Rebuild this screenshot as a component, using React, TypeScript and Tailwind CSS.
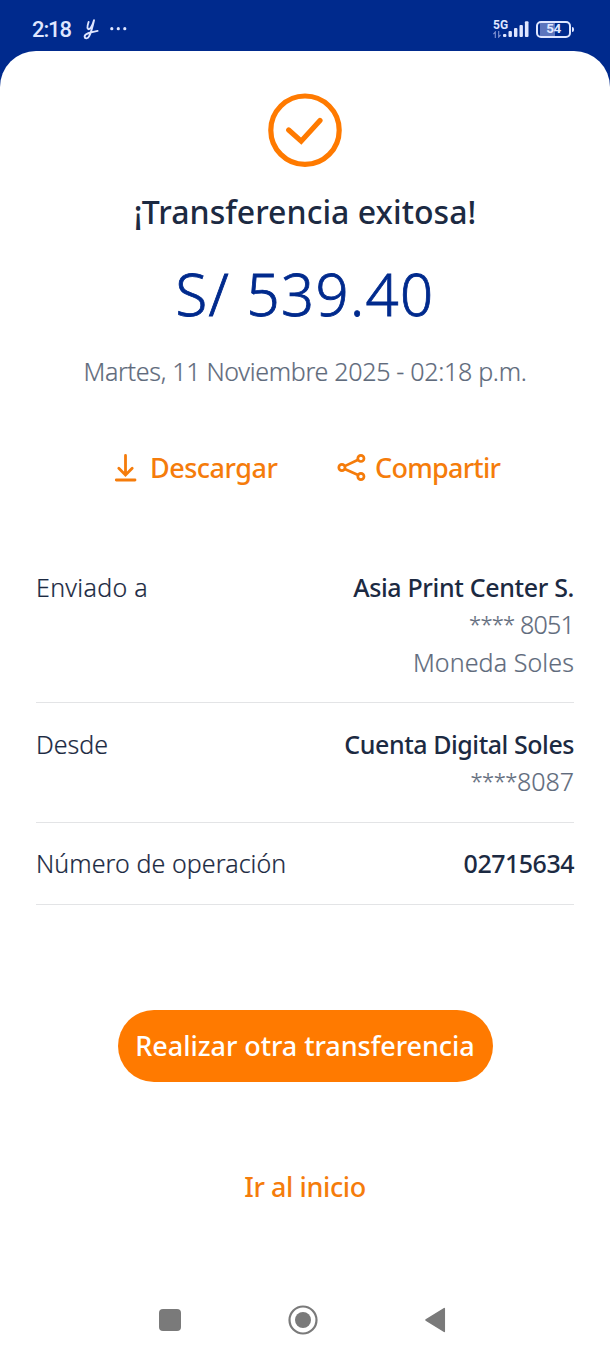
import type { ReactNode } from "react";

function StatusBar() {
  return (
    <header className="flex h-[51px] items-start justify-between pr-[36px] pl-8 pt-[15px] text-[#dfe6ff]">
      <div className="flex h-[28px] items-center">
        <span className="w-[51px] pt-px font-['Roboto',sans-serif] text-[22px] leading-[28px] font-medium tracking-[-1.1px]">2:18</span>
        <svg className="h-[24px] w-[18px]" viewBox="0 0 18 24" fill="none" stroke="currentColor" strokeWidth="1.9" strokeLinecap="round" strokeLinejoin="round">
          <path d="M5.6 5C4.6 8 3.8 11.6 5.5 12.2C7.3 12.8 9.5 8.2 11 3.2C9.7 9 7.8 16 6.2 19.2C4.8 21.9 1.8 22 1.6 19.7C1.4 16.5 7.4 15.3 14.6 13.9" />
        </svg>
        <svg className="ml-[8px] h-1 w-[18px]" viewBox="0 0 18 4" fill="currentColor">
          <circle cx="2.8" cy="1.7" r="1.6" />
          <circle cx="9.3" cy="1.7" r="1.6" />
          <circle cx="15.8" cy="1.7" r="1.6" />
        </svg>
      </div>
      <div className="flex h-[28px] items-center">
        <div className="flex h-[20px] w-[14px] flex-col items-start">
          <span className="font-['Roboto',sans-serif] text-[12px] leading-[12px] font-bold">5G</span>
          <svg className="h-[7px] w-2" viewBox="0 0 8 7" fill="none" stroke="#8294d2" strokeWidth="1.1">
            <path d="M2.3 7V1L.4 3.2M5.7 0V6L7.6 3.8" />
          </svg>
        </div>
        <svg className="-ml-[5px] mr-[7px] h-[18px] w-[27px]" viewBox="0 0 27 18" fill="currentColor">
          <rect x="1" y="14.1" width="3.4" height="3" rx="1" />
          <rect x="6.5" y="11.1" width="3.4" height="6" rx="1" />
          <rect x="12" y="8.1" width="3.4" height="9" rx="1" />
          <rect x="17.5" y="5.1" width="3.4" height="12" rx="1" />
          <rect x="22.9" y="1.2" width="3.6" height="15.9" rx="1" />
        </svg>
        <div className="flex items-center gap-[1px]">
          <div className="flex h-[17px] w-[35px] items-center justify-center rounded-[5px] border-2 border-[#dfe6ff] bg-[linear-gradient(90deg,#002a8d_2px,#5c75bd_2px,#5c75bd_17px,#002a8d_17px)] font-['Roboto',sans-serif] text-[13.5px] leading-none font-bold tracking-[-0.5px]">
            54
          </div>
          <div className="h-[5px] w-[2px] rounded-r bg-[#dfe6ff]" />
        </div>
      </div>
    </header>
  );
}

function Row({ label, children }: { label: ReactNode; children: ReactNode }) {
  return (
    <div className="flex justify-between border-b border-[#e3e4e6] pt-[22.5px] pb-[21px] text-[25px] leading-[37.5px] font-light">
      <div className="[-webkit-text-stroke:0.2px]">{label}</div>
      <div className="flex flex-col items-end text-[#5f6b7c]">{children}</div>
    </div>
  );
}

export default function App() {
  return (
    <div className="flex h-[1356px] w-[610px] flex-col bg-[#002a8d] font-['Noto_Sans',sans-serif] whitespace-nowrap text-[#1c2a42]">
      <StatusBar />
      <main className="flex flex-1 flex-col rounded-t-[36px] bg-white">
        <section className="flex flex-col items-center pt-[42px]">
          <svg className="h-[75px] w-[76px]" viewBox="0 0 76 75" fill="none" stroke="#ff7a00" strokeWidth="5.2" strokeLinecap="round">
            <circle cx="38" cy="37.2" r="34.2" />
            <path d="M21.7 37L34.2 48.2L53 27.5" />
          </svg>
          <h1 className="mt-6 text-[32px] leading-10 font-medium tracking-[0.05px]">¡Transferencia exitosa!</h1>
          <p className="mt-[30px] text-[58px] leading-[64px] font-light tracking-[1.4px] text-[#002a8d] [-webkit-text-stroke:0.8px]">S/ 539.40</p>
          <p className="mt-[27px] text-[25px] leading-9 font-light tracking-[-0.3px] text-[#5f6b7c] [-webkit-text-stroke:0.2px]">Martes, 11 Noviembre 2025 - 02:18 p.m.</p>
        </section>

        <div className="mt-[60px] flex pl-[114px] text-[27px] leading-9 font-medium text-[#f57c0b]">
          <button className="flex w-[223px] items-center">
            <svg className="mr-[12px] mb-px h-[30px] w-[24px]" viewBox="0 0 24 30" fill="none" stroke="currentColor" strokeWidth="2.8" strokeLinecap="round">
              <path d="M11.5 3.5V22M4.8 16.2L11.5 23L18.2 16.2M2.3 28H21" />
            </svg>
            <span className="pt-px tracking-[-0.5px]">Descargar</span>
          </button>
          <button className="flex items-center">
            <svg className="mr-[9px] mb-px h-[28px] w-[29px]" viewBox="0 0 29 28" fill="none" stroke="currentColor" strokeWidth="2.7">
              <circle cx="4.9" cy="14.5" r="3.1" />
              <circle cx="23.9" cy="5.4" r="3.1" />
              <circle cx="23.9" cy="23.5" r="3.1" />
              <path d="M7.7 13.1L21.1 6.8M7.7 15.9L21.1 22.1" />
            </svg>
            <span className="pt-px tracking-[-0.75px]">Compartir</span>
          </button>
        </div>

        <section className="mt-[60px] px-9">
          <Row label={<span className="tracking-[0.3px]">Enviado a</span>}>
            <span className="font-medium tracking-[-0.35px] text-[#1c2a42]">Asia Print Center S.</span>
            <span className="[-webkit-text-stroke:0.2px]"><span className="align-[2px] text-[22px] leading-none tracking-[-0.8px]">****</span><span className="tracking-[-0.8px]"> 8051</span></span>
            <span className="tracking-[0.1px] [-webkit-text-stroke:0.2px]">Moneda Soles</span>
          </Row>
          <Row label="Desde">
            <span className="font-medium tracking-[-0.45px] text-[#1c2a42]">Cuenta Digital Soles</span>
            <span className="[-webkit-text-stroke:0.2px]"><span className="align-[2px] text-[22px] leading-none tracking-[-0.5px]">****</span>8087</span>
          </Row>
          <Row label={<span className="tracking-[0.08px]">Número de operación</span>}>
            <span className="font-medium tracking-[-0.5px] text-[#1c2a42]">02715634</span>
          </Row>
        </section>

        <div className="mt-[105px] flex flex-col items-center text-[27px] font-medium">
          <button className="flex h-[72px] w-[375px] items-center justify-center rounded-full bg-[#ff7a00] pt-[2px] tracking-[-0.05px] text-white">Realizar otra transferencia</button>
          <button className="mt-[87px] leading-9 tracking-[-0.4px] text-[#f57c0b]">Ir al inicio</button>
        </div>

        <nav className="mt-auto flex h-[72px] items-center pl-[159px] text-[#7a7a7a]">
          <div className="h-[22px] w-[22px] rounded-[4px] bg-[#7a7a7a]" />
          <svg className="ml-[107px] h-[30px] w-[30px]" viewBox="0 0 30 30">
            <circle cx="15" cy="15" r="13.5" fill="none" stroke="currentColor" strokeWidth="2.2" />
            <circle cx="15" cy="15" r="8" fill="currentColor" />
          </svg>
          <svg className="ml-[107px] h-[26px] w-[21px]" viewBox="0 0 21 26" fill="currentColor" stroke="currentColor" strokeWidth="1.5" strokeLinejoin="round">
            <path d="M1 13L19.3 1.6V24.4Z" />
          </svg>
        </nav>
      </main>
    </div>
  );
}
